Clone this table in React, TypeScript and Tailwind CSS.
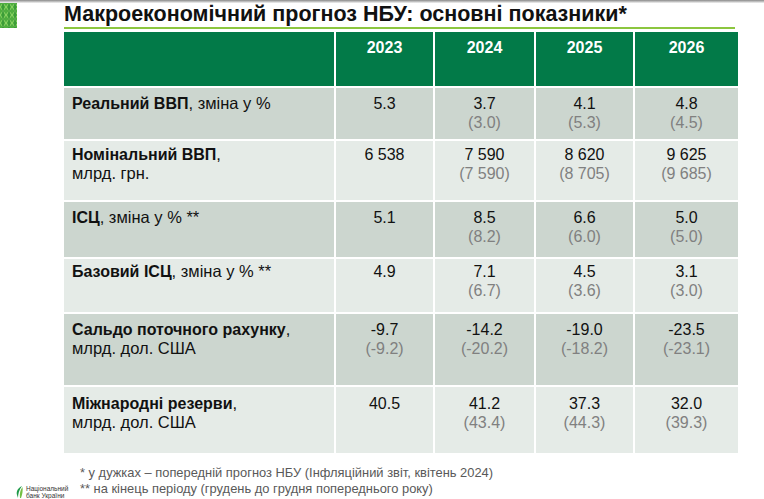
import React from "react"

const years = ["2023", "2024", "2025", "2026"]

type Row = {
  bold: string
  rest: string
  sub?: string
  values: { main: string; prev?: string }[]
  height: string
  pad: string
  dark: boolean
}

const rows: Row[] = [
  {
    bold: "Реальний ВВП",
    rest: ", зміна у %",
    values: [{ main: "5.3" }, { main: "3.7", prev: "(3.0)" }, { main: "4.1", prev: "(5.3)" }, { main: "4.8", prev: "(4.5)" }],
    height: "h-[51px]",
    pad: "pt-[6px]",
    dark: true,
  },
  {
    bold: "Номінальний ВВП",
    rest: ",",
    sub: "млрд. грн.",
    values: [{ main: "6 538" }, { main: "7 590", prev: "(7 590)" }, { main: "8 620", prev: "(8 705)" }, { main: "9 625", prev: "(9 685)" }],
    height: "h-[59px]",
    pad: "pt-[4px]",
    dark: false,
  },
  {
    bold: "ІСЦ",
    rest: ", зміна у % **",
    values: [{ main: "5.1" }, { main: "8.5", prev: "(8.2)" }, { main: "6.6", prev: "(6.0)" }, { main: "5.0", prev: "(5.0)" }],
    height: "h-[55px]",
    pad: "pt-[6px]",
    dark: true,
  },
  {
    bold: "Базовий ІСЦ",
    rest: ", зміна у % **",
    values: [{ main: "4.9" }, { main: "7.1", prev: "(6.7)" }, { main: "4.5", prev: "(3.6)" }, { main: "3.1", prev: "(3.0)" }],
    height: "h-[53px]",
    pad: "pt-[3px]",
    dark: false,
  },
  {
    bold: "Сальдо поточного рахунку",
    rest: ",",
    sub: "млрд. дол. США",
    values: [{ main: "-9.7", prev: "(-9.2)" }, { main: "-14.2", prev: "(-20.2)" }, { main: "-19.0", prev: "(-18.2)" }, { main: "-23.5", prev: "(-23.1)" }],
    height: "h-[71px]",
    pad: "pt-[6px]",
    dark: true,
  },
  {
    bold: "Міжнародні резерви",
    rest: ",",
    sub: "млрд. дол. США",
    values: [{ main: "40.5" }, { main: "41.2", prev: "(43.4)" }, { main: "37.3", prev: "(44.3)" }, { main: "32.0", prev: "(39.3)" }],
    height: "h-[66px]",
    pad: "pt-[7px]",
    dark: false,
  },
]

// green lattice block in the top-left corner
function Pattern() {
  return (
    <div className="w-[17px] h-[25px] bg-[#4fae3f] shrink-0">
      <svg width="17" height="25" viewBox="0 0 17 25" className="block">
        <path
          d="M0 4 L3 0 L6 4 L9 0 L12 4 L15 0 L17 3 M0 12 L3 8 L6 12 L9 8 L12 12 L15 8 L17 11 M0 20 L3 16 L6 20 L9 16 L12 20 L15 16 L17 19 M0 4 L3 8 L6 4 L9 8 L12 4 L15 8 L17 5 M0 12 L3 16 L6 12 L9 16 L12 12 L15 16 L17 13 M0 20 L3 24 L6 20 L9 24 L12 20 L15 24 L17 21"
          stroke="#8fd566"
          strokeWidth="1"
          fill="none"
        />
        <path d="M3 0 V25 M9 0 V25 M15 0 V25" stroke="#2a8a32" strokeWidth="1" />
      </svg>
    </div>
  )
}

function Logo() {
  return (
    <div className="flex items-center gap-[3px] pl-[16px] -mr-[8px]">
      <svg width="7" height="12" viewBox="0 0 7 12" className="shrink-0">
        <path d="M6 0 C2 2 0 5 1 9 L2 12 C2 8 3 4 6 0 Z" fill="#1f9a4a" />
        <path d="M6.5 1 C4 4 3.5 8 4 12 L5 12 C6.5 8 7 4 6.5 1 Z" fill="#74c043" />
      </svg>
      <div className="text-[6.5px] leading-[7px] text-[#333] whitespace-nowrap">
        <div>Національний</div>
        <div>банк України</div>
      </div>
    </div>
  )
}

export default function App() {
  return (
    <div className="w-[764px] h-[499px] bg-white overflow-hidden flex flex-col" style={{ fontFamily: '"Liberation Sans", Arial, sans-serif' }}>
      <div className="h-[3px] bg-gradient-to-b from-[#8a8a8a] to-[#f4f4f4]" />
      <div className="flex flex-1">
        <aside className="w-[64px] shrink-0 flex flex-col justify-between">
          <Pattern />
          <Logo />
        </aside>

        <main className="flex flex-col">
          <h1 className="w-[671px] text-[21.5px] leading-[23px] font-bold text-[#111] border-b-[2px] border-[#8cc63f] pb-[1px]">
            Макроекономічний прогноз НБУ: основні показники*
          </h1>

          <div className="mt-[3px] grid grid-cols-[270px_97px_99px_97px_103px] gap-[2px] bg-white text-[16px] leading-[19px]">
            <div className="h-[54px] bg-[#027a48]" />
            {years.map((y) => (
              <div key={y} className="h-[54px] bg-[#027a48] text-white font-bold text-center pt-[6px]">
                {y}
              </div>
            ))}

            {rows.map((row) => {
              const bg = row.dark ? "bg-[#ccd6cf]" : "bg-[#e5ebe7]"
              return (
                <React.Fragment key={row.bold}>
                  <div className={`${row.height} ${bg} ${row.pad} pl-[8px] text-[#111]`}>
                    <div>
                      <span className="font-bold">{row.bold}</span>
                      <span className="text-[16.5px]">{row.rest}</span>
                    </div>
                    {row.sub && <div className="text-[16.5px]">{row.sub}</div>}
                  </div>
                  {row.values.map((v, i) => (
                    <div key={i} className={`${row.height} ${bg} ${row.pad} text-center`}>
                      <div className="text-[#111]">{v.main}</div>
                      {v.prev && <div className="text-[#808080]">{v.prev}</div>}
                    </div>
                  ))}
                </React.Fragment>
              )
            })}
          </div>

          <div className="mt-[12px] pl-[16px] text-[12.9px] leading-[16px] text-[#595959]">
            <p>* у дужках – попередній прогноз НБУ (Інфляційний звіт, квітень 2024)</p>
            <p>** на кінець періоду (грудень до грудня попереднього року)</p>
          </div>
        </main>
      </div>
    </div>
  )
}
